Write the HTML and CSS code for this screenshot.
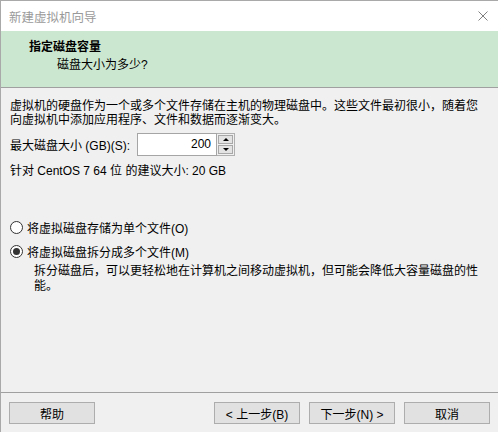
FILE: index.html
```html
<!DOCTYPE html>
<html lang="zh-CN">
<head>
<meta charset="utf-8">
<title>新建虚拟机向导</title>
<link rel="stylesheet" href="styles.css">
</head>
<body>
<div class="window">
  <div class="titlebar">
    <span class="title">新建虚拟机向导</span>
    <svg class="close" width="10" height="10" viewBox="0 0 10 10"><path d="M0.5 0.5 L9.5 9.5 M9.5 0.5 L0.5 9.5" stroke="#808080" stroke-width="1" fill="none"/></svg>
  </div>
  <div class="header">
    <div class="h-title">指定磁盘容量</div>
    <div class="h-sub">磁盘大小为多少?</div>
  </div>
  <div class="content">
    <p class="para">虚拟机的硬盘作为一个或多个文件存储在主机的物理磁盘中。这些文件最初很小，随着您向虚拟机中添加应用程序、文件和数据而逐渐变大。</p>
    <div class="size-row">
      <span class="label">最大磁盘大小 (GB)(S):</span>
      <div class="spin">
        <div class="spin-input">200</div>
        <div class="spin-btns">
          <div class="spin-btn"><span class="tri up"></span></div>
          <div class="spin-btn"><span class="tri down"></span></div>
        </div>
      </div>
    </div>
    <div class="recommend">针对 CentOS 7 64 位 的建议大小: 20 GB</div>
    <div class="options">
      <div class="radio-row"><span class="radio"></span><span>将虚拟磁盘存储为单个文件(O)</span></div>
      <div class="radio-row"><span class="radio checked"></span><span>将虚拟磁盘拆分成多个文件(M)</span></div>
      <p class="desc">拆分磁盘后，可以更轻松地在计算机之间移动虚拟机，但可能会降低大容量磁盘的性能。</p>
    </div>
  </div>
  <div class="footer">
    <button class="btn">帮助</button>
    <div class="spacer"></div>
    <button class="btn">&lt; 上一步(B)</button>
    <button class="btn">下一步(N) &gt;</button>
    <button class="btn">取消</button>
  </div>
</div>
</body>
</html>
```
FILE: styles.css
```css
* { box-sizing: border-box; }
html, body { margin: 0; padding: 0; }
body {
  width: 498px;
  height: 432px;
  overflow: hidden;
  font-family: "Liberation Sans", "Noto Sans CJK SC", sans-serif;
  font-size: 12px;
  color: #000;
  background: #f0f0f0;
}
.window {
  height: 432px;
  border-top: 1px solid #a9a9a9;
  border-left: 1px solid #a9a9a9;
  display: flex;
  flex-direction: column;
  background: #f0f0f0;
}
.titlebar {
  height: 30px;
  background: #fff;
  display: flex;
  align-items: center;
  padding-left: 8px;
  padding-right: 10px;
}
.title {
  color: #9a9a9a;
  font-size: 12.5px;
  flex: 1;
}
.close { display: block; }
.header {
  height: 57px;
  background: #cce7cf;
  border-bottom: 1px solid #a0a0a0;
  padding-top: 8px;
}
.h-title {
  font-weight: bold;
  padding-left: 28px;
  line-height: 16px;
}
.h-sub {
  padding-left: 56px;
  line-height: 16px;
  margin-top: 2px;
}
.content {
  flex: 1;
  padding: 12px 9px 0 9px;
}
.para {
  margin: 0;
  line-height: 13.5px;
}
.size-row {
  display: flex;
  align-items: center;
  margin-top: 6px;
}
.label {
  flex: none;
  width: 127px;
  min-width: 0;
  white-space: nowrap;
}
.spin {
  display: flex;
  height: 23px;
}
.spin-input {
  width: 80px;
  height: 23px;
  background: #fff;
  border: 1px solid #a5a5a5;
  text-align: right;
  padding-right: 5px;
  line-height: 21px;
}
.spin-btns {
  width: 18px;
  height: 23px;
  border: 1px solid #b0b0b0;
  border-left: none;
  display: flex;
  flex-direction: column;
  padding: 1px;
  gap: 1px;
}
.spin-btn {
  flex: 1;
  background: #e3e3e3;
  border: 1px solid #a8a8a8;
  display: flex;
  align-items: center;
  justify-content: center;
}
.tri {
  width: 0;
  height: 0;
  border-left: 3px solid transparent;
  border-right: 3px solid transparent;
}
.tri.up { border-bottom: 3px solid #000; }
.tri.down { border-top: 3px solid #000; }
.recommend {
  margin-top: 7px;
  line-height: 16px;
}
.options {
  margin-top: 36px;
}
.radio-row {
  display: flex;
  align-items: center;
  gap: 4px;
  height: 24px;
}
.radio {
  width: 13px;
  height: 13px;
  border-radius: 50%;
  border: 1px solid #333;
  background: #fff;
  display: flex;
  align-items: center;
  justify-content: center;
}
.radio.checked::after {
  content: "";
  width: 7px;
  height: 7px;
  border-radius: 50%;
  background: #333;
}
.desc {
  margin: 1px 0 0 24px;
  line-height: 15px;
}
.footer {
  border-top: 1px solid #a0a0a0;
  height: 40px;
  display: flex;
  align-items: flex-start;
  padding: 9px 8px 0 8px;
  gap: 9px;
}
.spacer { flex: 1; }
.btn {
  width: 86px;
  height: 22px;
  background: #e1e1e1;
  border: 1px solid #adadad;
  font-family: "Liberation Sans", "Noto Sans CJK SC", sans-serif;
  font-size: 12px;
  color: #000;
  padding: 0;
  margin: 0;
}
```
